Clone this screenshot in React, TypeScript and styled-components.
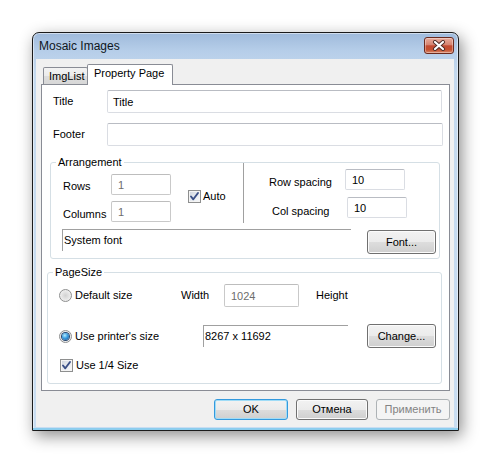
import React from "react"
import styled, { createGlobalStyle } from "styled-components"

const GlobalStyle = createGlobalStyle`
  html, body {
    margin: 0;
    padding: 0;
    background: #ffffff;
  }
  body {
    font-family: "Liberation Sans", Arial, sans-serif;
    font-size: 11px;
    color: #000000;
  }
  * {
    box-sizing: border-box;
  }
`

const Desktop = styled.div`
  width: 491px;
  height: 463px;
  padding: 32px 0 0 32px;
`

const Window = styled.div`
  width: 427px;
  height: 399px;
  border: 1px solid #1b1b1b;
  border-radius: 7px 7px 0 0;
  background: linear-gradient(#9fbadb 0px, #b6cee9 18px, #c4d9ee 40px, #c9ddf1 100%);
  padding: 0 4px 3px 3px;
  display: flex;
  flex-direction: column;
  box-shadow: 3px 5px 16px rgba(0, 0, 0, 0.45), inset 0 -2px 0 #8ccdee, inset 0 0 0 1px rgba(255, 255, 255, 0.5);
`

const TitleBar = styled.div`
  height: 26px;
  display: flex;
  align-items: flex-start;
  justify-content: space-between;
`

const Caption = styled.span`
  margin: 6px 0 0 3px;
  font-size: 12px;
  line-height: 15px;
  color: #0e1621;
`

const CloseButton = styled.div`
  width: 30px;
  height: 17px;
  margin-top: 4px;
  border: 1px solid #6b2a1e;
  border-radius: 3px;
  background: linear-gradient(#e8ab9c 0%, #d68470 45%, #c24a32 52%, #c4502f 78%, #d98a6d 100%);
  box-shadow: inset 0 0 0 1px rgba(255, 255, 255, 0.35);
  display: flex;
  align-items: center;
  justify-content: center;
`

const Client = styled.div`
  flex: 1;
  background: #f0f0f0;
  display: flex;
  flex-direction: column;
  padding: 5px 4px 0 5px;
`

const TabStrip = styled.div`
  display: flex;
  align-items: flex-end;
  height: 20px;
  margin-left: 2px;
  position: relative;
  z-index: 1;
`

const Tab = styled.div<{ $active?: boolean; $width: number }>`
  width: ${(p) => p.$width}px;
  height: ${(p) => (p.$active ? 21 : 17)}px;
  margin-left: ${(p) => (p.$active ? -1 : 0)}px;
  margin-bottom: ${(p) => (p.$active ? -1 : 0)}px;
  padding: ${(p) => (p.$active ? "1px 0 0 6px" : "0 0 0 5px")};
  line-height: ${(p) => (p.$active ? 14 : 16)}px;
  border: 1px solid #898c95;
  border-bottom: none;
  border-radius: 2px 2px 0 0;
  background: ${(p) => (p.$active ? "#ffffff" : "linear-gradient(#f3f3f3 0%, #ebebeb 50%, #dddddd 51%, #d7d7d7 100%)")};
  white-space: nowrap;
`

const Panel = styled.div`
  width: 409px;
  height: 307px;
  border: 1px solid #898c95;
  background: #ffffff;
  display: flex;
  flex-direction: column;
`

const FieldRow = styled.div<{ $top: number }>`
  display: flex;
  align-items: center;
  margin-top: ${(p) => p.$top}px;
  padding-left: 11px;
`

const Label = styled.span<{ $width?: number; $drop?: number; $left?: number }>`
  width: ${(p) => (p.$width ? `${p.$width}px` : "auto")};
  margin-left: ${(p) => p.$left ?? 0}px;
  padding-top: ${(p) => p.$drop ?? 0}px;
  align-self: ${(p) => (p.$drop ? "flex-start" : "center")};
  line-height: 13px;
  white-space: nowrap;
  flex-shrink: 0;
`

const TextBox = styled.div<{ $width: number; $height: number; $disabled?: boolean; $pad?: number }>`
  width: ${(p) => p.$width}px;
  height: ${(p) => p.$height}px;
  flex-shrink: 0;
  border: 1px solid ${(p) => (p.$disabled ? "#c9c9c9" : "#dadde3")};
  border-top-color: ${(p) => (p.$disabled ? "#bdbdbd" : "#b9bcc3")};
  border-radius: 2px;
  background: #ffffff;
  color: ${(p) => (p.$disabled ? "#6d6d6d" : "#000000")};
  padding: 0 0 0 ${(p) => p.$pad ?? 6}px;
  display: flex;
  align-items: center;
`

const Group = styled.fieldset<{ $top: number; $left: number; $width: number; $height: number }>`
  margin: ${(p) => p.$top}px 0 0 ${(p) => p.$left}px;
  width: ${(p) => p.$width}px;
  height: ${(p) => p.$height}px;
  padding: 0;
  min-width: 0;
  border: 1px solid #d5dfe5;
  border-radius: 3px;
  display: block;
`

const GroupTitle = styled.legend`
  margin-left: 5px;
  padding: 0 2px;
  font-size: 11px;
  line-height: 13px;
`

const ArrangeTop = styled.div`
  display: flex;
  height: 54px;
`

const LeftCol = styled.div`
  width: 120px;
  padding: 5px 0 0 12px;
  display: flex;
  flex-direction: column;
  gap: 6px;
`

const RightCol = styled.div`
  display: flex;
  flex-direction: column;
  gap: 7px;
`

const InputRow = styled.div<{ $indent?: number }>`
  display: flex;
  height: 21px;
  padding-left: ${(p) => p.$indent ?? 0}px;
`

const AutoBox = styled.div`
  width: 72px;
  padding-left: 17px;
  display: flex;
  align-items: center;
`

const EtchedLine = styled.div`
  width: 2px;
  height: 60px;
  margin-top: -6px;
  border-left: 1px solid #a0a0a0;
  border-right: 1px solid #ffffff;
`

const ArrangeBottom = styled.div`
  display: flex;
  align-items: flex-start;
  margin-top: 6px;
  padding-left: 11px;
`

const SunkenStatic = styled.div<{ $width: number; $top?: number }>`
  width: ${(p) => p.$width}px;
  height: 22px;
  margin-top: ${(p) => p.$top ?? 0}px;
  align-self: flex-start;
  flex-shrink: 0;
  border-top: 1px solid #a0a0a0;
  border-left: 1px solid #a0a0a0;
  padding: 4px 0 0 1px;
  line-height: 13px;
  white-space: nowrap;
`

const PageRow = styled.div<{ $top: number; $height: number; $indent?: number }>`
  display: flex;
  align-items: center;
  height: ${(p) => p.$height}px;
  margin-top: ${(p) => p.$top}px;
  padding-left: ${(p) => p.$indent ?? 11}px;
`

const Option = styled.label<{ $width?: number }>`
  display: flex;
  align-items: center;
  width: ${(p) => (p.$width ? `${p.$width}px` : "auto")};
  flex-shrink: 0;
  align-self: center;
`

const OptionText = styled.span`
  margin-left: 3px;
  line-height: 13px;
  white-space: nowrap;
`

const RadioMark = styled.span<{ $on?: boolean }>`
  width: 13px;
  height: 13px;
  flex-shrink: 0;
  border-radius: 50%;
  border: 1px solid #8e8f8f;
  background: radial-gradient(circle at 50% 50%, #d2d2d2 0%, #e4e4e4 45%, #fbfbfb 100%);
  display: flex;
  align-items: center;
  justify-content: center;

  &::after {
    content: "";
    display: ${(p) => (p.$on ? "block" : "none")};
    width: 7px;
    height: 7px;
    border-radius: 50%;
    background: radial-gradient(circle at 40% 35%, #b8ecff 0%, #3a9ee0 45%, #1a4f93 100%);
    box-shadow: 0 0 0 1px #26466f;
  }
`

const CheckMark = styled.span`
  width: 13px;
  height: 13px;
  flex-shrink: 0;
  border: 1px solid #8e8f8f;
  background: linear-gradient(135deg, #cdd3dc 0%, #e9ecf1 55%, #f8f9fa 100%);
  box-shadow: inset 0 0 0 1px #f4f4f4;
  display: flex;
  align-items: center;
  justify-content: center;
`

const Button = styled.div<{ $width: number; $height: number; $left?: number; $top?: number; $default?: boolean; $disabled?: boolean }>`
  width: ${(p) => p.$width}px;
  height: ${(p) => p.$height}px;
  margin-left: ${(p) => p.$left ?? 0}px;
  margin-top: ${(p) => p.$top ?? 0}px;
  flex-shrink: 0;
  border: 1px solid ${(p) => (p.$disabled ? "#adb2b5" : p.$default ? "#3399dd" : "#707070")};
  border-radius: 3px;
  background: ${(p) =>
    p.$disabled ? "#f4f4f4" : "linear-gradient(#f2f2f2 0%, #ebebeb 50%, #dddddd 51%, #cfcfcf 100%)"};
  box-shadow: ${(p) => (p.$default ? "inset 0 0 0 1px #9fdcf7" : p.$disabled ? "none" : "inset 0 0 0 1px #fbfbfb")};
  color: ${(p) => (p.$disabled ? "#838383" : "#000000")};
  display: flex;
  align-items: center;
  justify-content: center;
  line-height: 13px;
`

const ButtonBar = styled.div`
  display: flex;
  justify-content: flex-end;
  gap: 8px;
  margin-top: 8px;
`

const Check = () => (
  <CheckMark>
    <svg width="11" height="11" viewBox="0 0 11 11">
      <path d="M2 5.5 L4.3 8.3 L9 2" fill="none" stroke="#3a4f86" strokeWidth="1.9" strokeLinecap="round" strokeLinejoin="round" />
    </svg>
  </CheckMark>
)

export default function App() {
  return (
    <Desktop>
      <GlobalStyle />
      <Window>
        <TitleBar>
          <Caption>Mosaic Images</Caption>
          <CloseButton>
            <svg width="14" height="11" viewBox="0 0 14 11">
              <path d="M3 2 L11 9 M11 2 L3 9" stroke="#4a2a24" strokeWidth="4" strokeLinecap="round" />
              <path d="M3 2 L11 9 M11 2 L3 9" stroke="#ffffff" strokeWidth="2.2" strokeLinecap="round" />
            </svg>
          </CloseButton>
        </TitleBar>
        <Client>
          <TabStrip>
            <Tab $width={45}>ImgList</Tab>
            <Tab $width={86} $active>
              Property Page
            </Tab>
          </TabStrip>
          <Panel>
            <FieldRow $top={5}>
              <Label $width={54}>Title</Label>
              <TextBox $width={335} $height={23} $pad={5}>
                Title
              </TextBox>
            </FieldRow>
            <FieldRow $top={10}>
              <Label $width={54}>Footer</Label>
              <TextBox $width={336} $height={23} $pad={5} />
            </FieldRow>

            <Group $top={10} $left={8} $width={390} $height={103}>
              <GroupTitle>Arrangement</GroupTitle>
              <ArrangeTop>
                <LeftCol>
                  <InputRow>
                    <Label $width={48} $drop={6}>
                      Rows
                    </Label>
                    <TextBox $width={60} $height={21} $disabled>
                      1
                    </TextBox>
                  </InputRow>
                  <InputRow>
                    <Label $width={48} $drop={7}>
                      Columns
                    </Label>
                    <TextBox $width={60} $height={21} $disabled>
                      1
                    </TextBox>
                  </InputRow>
                </LeftCol>
                <AutoBox>
                  <Check />
                  <Label $left={2}>Auto</Label>
                </AutoBox>
                <EtchedLine />
                <RightCol>
                  <InputRow $indent={24}>
                    <Label $width={76} $drop={7}>
                      Row spacing
                    </Label>
                    <TextBox $width={60} $height={21}>
                      10
                    </TextBox>
                  </InputRow>
                  <InputRow $indent={27}>
                    <Label $width={75} $drop={8}>
                      Col spacing
                    </Label>
                    <TextBox $width={60} $height={21}>
                      10
                    </TextBox>
                  </InputRow>
                </RightCol>
              </ArrangeTop>
              <ArrangeBottom>
                <SunkenStatic $width={289}>System font</SunkenStatic>
                <Button $width={69} $height={24} $left={16} $top={1}>
                  Font...
                </Button>
              </ArrangeBottom>
            </Group>

            <Group $top={7} $left={5} $width={395} $height={118}>
              <GroupTitle>PageSize</GroupTitle>
              <PageRow $top={5} $height={23}>
                <Option $width={122}>
                  <RadioMark />
                  <OptionText>Default size</OptionText>
                </Option>
                <Label $width={43}>Width</Label>
                <TextBox $width={75} $height={23} $disabled>
                  1024
                </TextBox>
                <Label $left={17}>Height</Label>
              </PageRow>
              <PageRow $top={17} $height={24}>
                <Option $width={144}>
                  <RadioMark $on />
                  <OptionText>Use printer's size</OptionText>
                </Option>
                <SunkenStatic $width={145} $top={1}>
                  8267 x 11692
                </SunkenStatic>
                <Button $width={69} $height={24} $left={19}>
                  Change...
                </Button>
              </PageRow>
              <PageRow $top={10} $height={14} $indent={12}>
                <Option>
                  <Check />
                  <OptionText>Use 1/4 Size</OptionText>
                </Option>
              </PageRow>
            </Group>
          </Panel>
          <ButtonBar>
            <Button $width={74} $height={21} $default>
              OK
            </Button>
            <Button $width={72} $height={21}>
              Отмена
            </Button>
            <Button $width={74} $height={21} $disabled>
              Применить
            </Button>
          </ButtonBar>
        </Client>
      </Window>
    </Desktop>
  )
}
